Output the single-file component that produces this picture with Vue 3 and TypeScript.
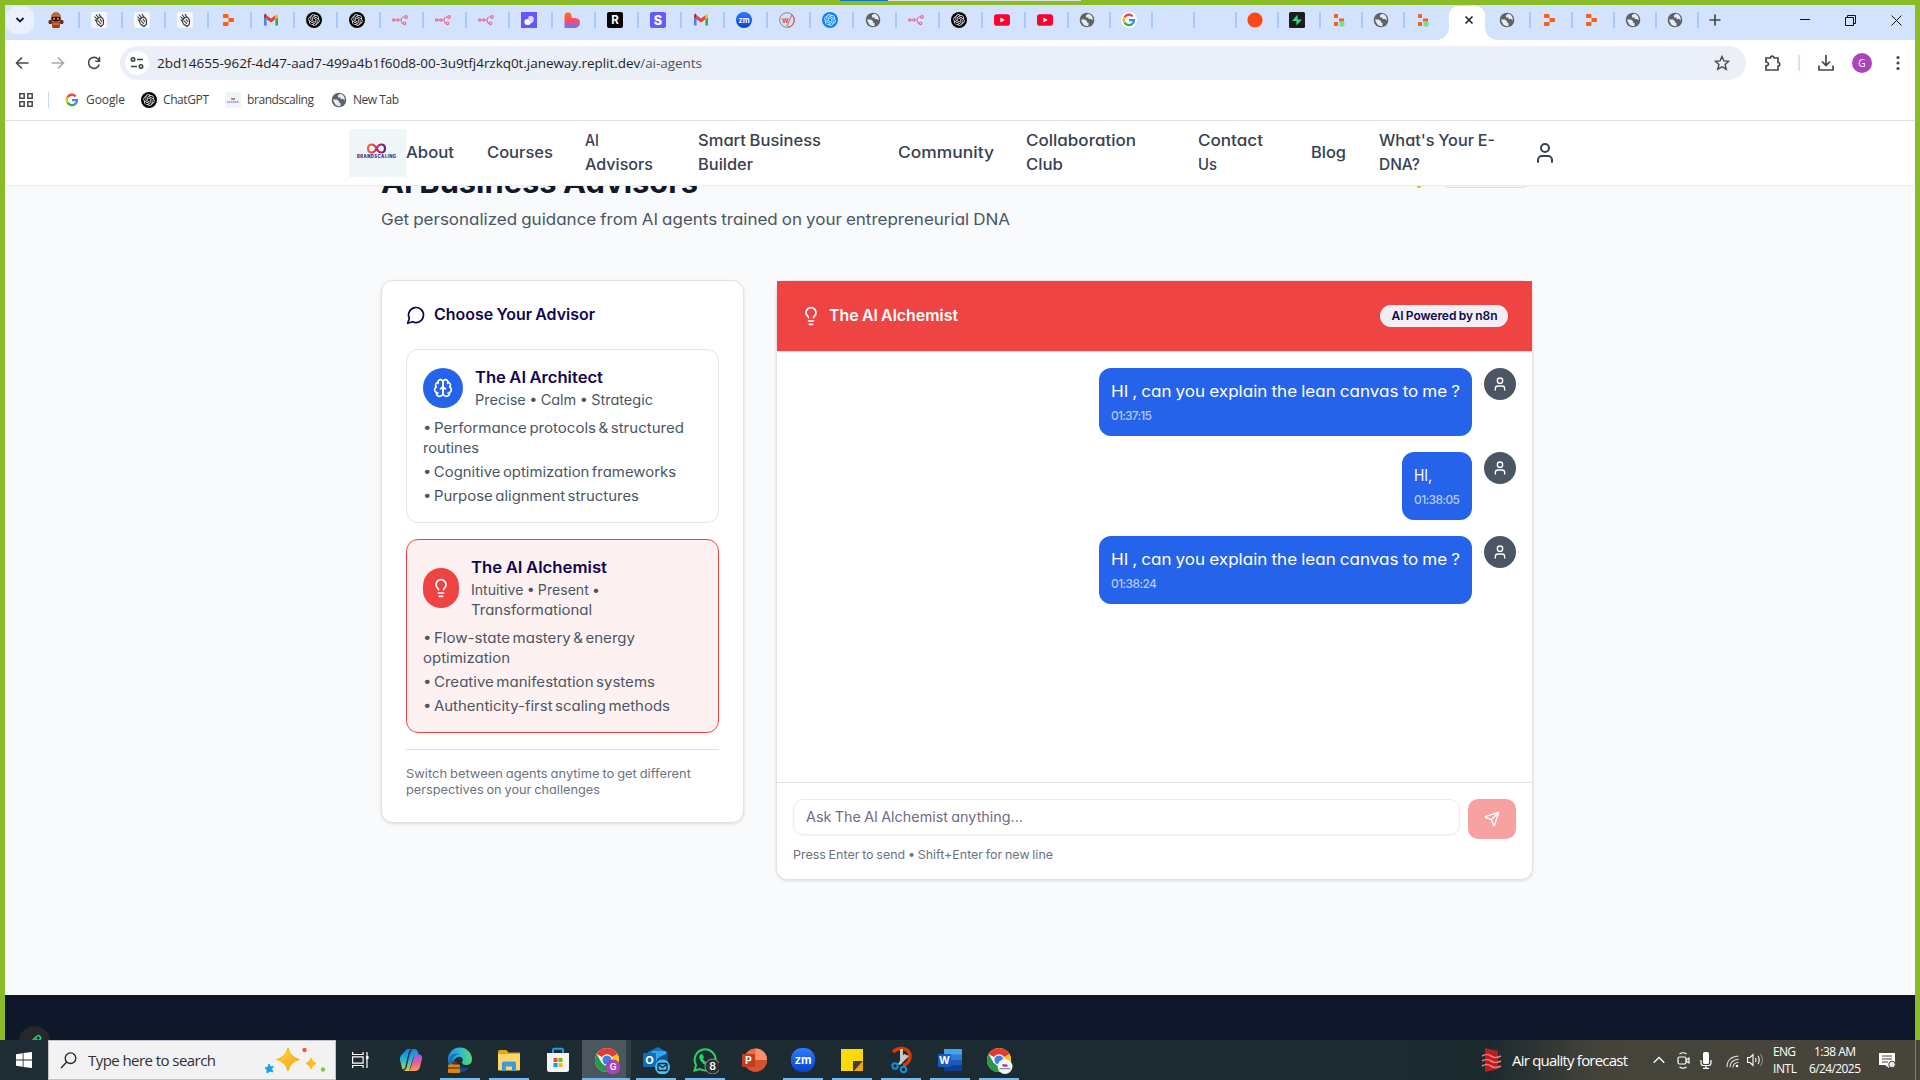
<script setup lang="ts">
interface Tab { icon: string; kind?: string }
interface Line { text: string; w: number }
interface NavItem { width: number; lines: Line[] }
interface Advisor { id: string; name: Line; tags: Line[]; points: Line[][]; icon: string }
interface Message { w: number; text: Line; time: Line }
interface App { icon: string; line?: number; active?: boolean }

const naturalWidth = (el: HTMLElement): number => {
  const range = document.createRange()
  range.selectNodeContents(el)
  return range.getBoundingClientRect().width
}

// Spreads a run of text over an exact width by adjusting its tracking.
const vFit = {
  mounted(el: HTMLElement, binding: { value: number }) {
    const n = Math.max(1, (el.textContent || '').length - 1)
    el.style.letterSpacing = ((binding.value - naturalWidth(el)) / n).toFixed(3) + 'px'
    el.style.width = binding.value + 'px'
  }
}

const vWide = {
  mounted(el: HTMLElement, binding: { value: number }) {
    el.style.transform = `scaleX(${(binding.value / naturalWidth(el)).toFixed(4)})`
    el.style.width = binding.value + 'px'
  }
}

const knot = 'M22.2819 9.8211a5.9847 5.9847 0 0 0-.5157-4.9108 6.0462 6.0462 0 0 0-6.5098-2.9A6.0651 6.0651 0 0 0 4.9807 4.1818a5.9847 5.9847 0 0 0-3.9977 2.9 6.0462 6.0462 0 0 0 .7427 7.0966 5.98 5.98 0 0 0 .511 4.9107 6.051 6.051 0 0 0 6.5146 2.9001A5.9847 5.9847 0 0 0 13.2599 24a6.0557 6.0557 0 0 0 5.7718-4.2058 5.9894 5.9894 0 0 0 3.9977-2.9001 6.0557 6.0557 0 0 0-.7475-7.0729zm-9.022 12.6081a4.4755 4.4755 0 0 1-2.8764-1.0408l.1419-.0804 4.7783-2.7582a.7948.7948 0 0 0 .3927-.6813v-6.7369l2.02 1.1686a.071.071 0 0 1 .038.052v5.5826a4.504 4.504 0 0 1-4.4945 4.4944zm-9.6607-4.1254a4.4708 4.4708 0 0 1-.5346-3.0137l.142.0852 4.783 2.7582a.7712.7712 0 0 0 .7806 0l5.8428-3.3685v2.3324a.0804.0804 0 0 1-.0332.0615L9.74 19.9502a4.4992 4.4992 0 0 1-6.1408-1.6464zM2.3408 7.8956a4.485 4.485 0 0 1 2.3655-1.9728V11.6a.7664.7664 0 0 0 .3879.6765l5.8144 3.3543-2.0201 1.1685a.0757.0757 0 0 1-.071 0l-4.8303-2.7865A4.504 4.504 0 0 1 2.3408 7.872zm16.5963 3.8558L13.1038 8.364 15.1192 7.2a.0757.0757 0 0 1 .071 0l4.8303 2.7913a4.4944 4.4944 0 0 1-.6765 8.1042v-5.6772a.79.79 0 0 0-.407-.667zm2.0107-3.0231l-.142-.0852-4.7735-2.7818a.7759.7759 0 0 0-.7854 0L9.409 9.2297V6.8974a.0662.0662 0 0 1 .0284-.0615l4.8303-2.7866a4.4992 4.4992 0 0 1 6.6802 4.66zM8.3065 12.863l-2.02-1.1638a.0804.0804 0 0 1-.038-.0567V6.0742a4.4992 4.4992 0 0 1 7.3757-3.4537l-.142.0805L8.704 5.459a.7948.7948 0 0 0-.3927.6813zm1.0976-2.3654l2.602-1.4998 2.6069 1.4998v2.9994l-2.5974 1.4997-2.6067-1.4997Z'
const gpt = (bg: string, fg: string) => `<circle cx="8" cy="8" r="8" fill="${bg}"/><path transform="translate(2.3 2.3) scale(.475)" fill="${fg}" d="${knot}"/>`
const font = 'font-family="Inter, sans-serif" text-anchor="middle"'

// Favicons, drawn in a 16x16 box.
const fav: Record<string, string> = {
  robot: '<circle cx="8" cy="5.2" r="5" fill="#b4532c"/><path d="M3 4.5Q8-1 13 4.5l-.5 1h-9z" fill="#d0713c"/><rect x="3.4" y="4.8" width="9.2" height="4.4" rx="1.6" fill="#2e1913"/><circle cx="6" cy="6.8" r="1" fill="#e8a15f"/><circle cx="10" cy="6.8" r="1" fill="#e8a15f"/><rect x=".6" y="8" width="3.4" height="4" rx="1.2" fill="#5a2a1d"/><rect x="12" y="8" width="3.4" height="4" rx="1.2" fill="#5a2a1d"/><path d="M3.5 9.5h9L11.5 16h-7z" fill="#a63c1e"/><path d="M5 12h6" stroke="#f0a24b"/>',
  hand: '<rect width="16" height="16" rx="2.5" fill="#f7f7f8"/><g fill="none" stroke="#34343a" stroke-width="1.100"><path d="M5 2.500l3 4M3.500 4.500l3 3.500M8 2l2 3.500M3.800 7.500l2.200 2.500M10 5q3 2 2.500 5.500l-.3 2L10 14.500 6.500 12q-1.500-2-.5-4.500t4-2.500z"/><path d="M7 8.500l3 3.500M9 7l2 3"/></g>',
  replit: '<path fill="#f86015" d="M3 3q0-1 1-1h3.500q1 0 1 1v3H4Q3 6 3 5zM8.500 6H13q1 0 1 1v2q0 1-1 1H8.500zM3 11q0-1 1-1h4.500v3q0 1-1 1H4q-1 0-1-1z"/>',
  replitOn: '<path fill="#f86015" d="M3 3q0-1 1-1h3v4H3zM8 6.500h5V9.500H8zM3 10h4v4H3z"/><circle cx="11" cy="12" r="2.700" fill="#6fe285"/>',
  gmail: '<path fill="#4285f4" d="M1 13.500h2.600V7.200L1 5.200z"/><path fill="#34a853" d="M12.400 13.500H15V5.200l-2.600 2z"/><path fill="#ea4335" d="M3.600 3.200 8 6.500l4.400-3.300v4L8 10.500 3.600 7.200z"/><path fill="#c5221f" d="M1 3.700Q2-.2 3.600 3.200v4L1 5.200z"/><path fill="#fbbc04" d="M15 3.700Q14 1 12.400 3.200v4L15 5.200z"/>',
  gpt: gpt('#050505', '#fff'),
  gptBlue: gpt('#0b84fa', '#fff'),
  n8n: '<g fill="none" stroke="#ea6d92" stroke-width="1.200"><circle cx="1.700" cy="8" r="1.100"/><circle cx="5.800" cy="8" r="1.100"/><circle cx="14" cy="5" r="1.300"/><circle cx="12.500" cy="11.300" r="1.300"/><path d="M2.900 8h1.700M7 8h1.500Q9.300 8 9.500 6.600T11.300 5h1.300M8.500 8Q9.300 8 9.500 9.700T11 11.300"/></g>',
  purple: '<rect width="16" height="16" fill="#6457fa"/><rect x="3.400" y="7" width="6.500" height="6" rx="3" fill="#fff"/><path d="M7 5.500a3 3 0 0 1 5.500 0c1.200 3.500-1 5.500-3 6z" fill="#d9d5ff"/>',
  heart: '<path fill="url(#heart)" d="M.5 4Q.5.500 4 .500T7.700 4.500V6h3.500Q16 6.300 16 10.500T11.500 16H.5z"/>',
  r: `<rect width="16" height="16" rx="2" fill="#050505"/><text x="8" y="12.200" font-size="11.500" font-weight="700" fill="#fff" ${font}>R</text>`,
  s: `<rect width="16" height="16" rx="2" fill="#635bff"/><text x="8" y="12.500" font-size="12.500" font-weight="800" fill="#fff" ${font}>S</text>`,
  zoom: `<circle cx="8" cy="8" r="8" fill="url(#zoom)"/><text x="8" y="10.500" font-size="7.500" font-weight="700" fill="#fff" ${font}>zm</text>`,
  w: `<circle cx="8" cy="8" r="7.300" fill="none" stroke="#858585"/><path d="M8.500 15.300A7.300 7.300 0 0 0 13 2.700L8 14" fill="none" stroke="#df554d"/><text x="6.500" y="11" font-size="8" font-weight="700" fill="#df554d" ${font}>w</text>`,
  globe: '<circle cx="8" cy="8" r="7.300" fill="#5f6368"/><path fill="#e5ebf5" d="M2 7.500h4l2 1.800v1.500h1.500v3.400Q3.500 14.500 2 7.500zM9.500 1.800 7 3v2.500h2.500V7H12l1.700 1.500Q14.300 3.500 9.500 1.800z"/>',
  youtube: '<rect y="2.300" width="16" height="11.400" rx="2.800" fill="#ff0033"/><path d="M6.400 5.500v5l4.300-2.500z" fill="#fff"/>',
  google: '<circle cx="8" cy="8" r="8" fill="#fff"/><g fill="none" stroke-width="2.300"><path stroke="#ea4335" d="M3.500 5.300A5 5 0 0 1 11.600 4.400"/><path stroke="#fbbc04" d="M3.500 5.300a5.100 5.100 0 0 0 0 5.200"/><path stroke="#34a853" d="M3.500 10.500a5 5 0 0 0 8 1.100"/><path stroke="#4285f4" d="M8 8.200h5a5 5 0 0 1-1.500 3.400"/></g>',
  orange: '<circle cx="8" cy="8" r="7.600" fill="#ff4716"/>',
  supa: '<rect width="16" height="16" rx="1.500" fill="#1c1c1c"/><path fill="#3ecf8e" d="M8.600 2.500v5H13L7.400 13.500V9H3z"/>',
  brand: '<rect width="16" height="16" fill="#edf5f7"/><path d="M8 7c-2.200-2.200-2.200 1.800 0 0s2.200 1.800 0 0" fill="none" stroke="#c2335b" stroke-width=".9"/><path d="M2 10h12" stroke="#59358e" stroke-width=".8" stroke-dasharray="1.500 .4"/>',
  none: ''
}

const rep = (icon: string, n: number): Tab[] => Array.from({ length: n }, () => ({ icon }))
const seq = (names: string, kind: string): Tab[] => names.split(' ').map(icon => ({ icon, kind }))
const tabs: Tab[] = [
  { icon: 'robot' }, ...rep('hand', 3),
  ...seq('replit gmail gpt gpt n8n n8n n8n purple heart r s gmail zoom w gptBlue globe n8n gpt youtube youtube', ''),
  ...seq('globe google none none orange supa replitOn globe', 'slim'), { icon: 'replitOn', kind: 'slim last' }
]
const lateTabs = seq('globe replit replit globe globe', 'slim')

const bookmarks = [
  { icon: 'google', text: 'Google', w: 39, width: 77 },
  { icon: 'gpt', text: 'ChatGPT', w: 46, width: 84 },
  { icon: 'brand', text: 'brandscaling', w: 67, width: 106 },
  { icon: 'globe', text: 'New Tab', w: 46, width: 80 }
]

const nav: NavItem[] = [
  { width: 81, lines: [{ text: 'About', w: 48 }] },
  { width: 98, lines: [{ text: 'Courses', w: 66 }] },
  { width: 113, lines: [{ text: 'AI', w: 14 }, { text: 'Advisors', w: 68 }] },
  { width: 200, lines: [{ text: 'Smart Business', w: 123 }, { text: 'Builder', w: 55 }] },
  { width: 128, lines: [{ text: 'Community', w: 96 }] },
  { width: 172, lines: [{ text: 'Collaboration', w: 110 }, { text: 'Club', w: 37 }] },
  { width: 113, lines: [{ text: 'Contact', w: 65 }, { text: 'Us', w: 19 }] },
  { width: 68, lines: [{ text: 'Blog', w: 35 }] },
  { width: 154, lines: [{ text: "What's Your E-", w: 116 }, { text: 'DNA?', w: 41 }] }
]

const svg = {
  user: '<path d="M19 21v-2a4 4 0 0 0-4-4H9a4 4 0 0 0-4 4v2"/><circle cx="12" cy="7" r="4"/>',
  bulb: '<path d="M15 14c.2-1 .7-1.7 1.5-2.5 1-.9 1.5-2.2 1.5-3.5A6 6 0 0 0 6 8c0 1 .2 2.2 1.5 3.5.7.7 1.3 1.5 1.5 2.500M9 18h6M10 22h4"/>',
  brain: '<path d="M12 5a3 3 0 1 0-5.997.125 4 4 0 0 0-2.526 5.770 4 4 0 0 0 .556 6.588A4 4 0 1 0 12 18Z"/><path d="M12 5a3 3 0 1 1 5.997.125 4 4 0 0 1 2.526 5.770 4 4 0 0 1-.556 6.588A4 4 0 1 1 12 18Z"/><path d="M15 13a4.500 4.500 0 0 1-3-4 4.500 4.500 0 0 1-3 4M17.599 6.500a3 3 0 0 0 .399-1.375M6.003 5.125A3 3 0 0 0 6.401 6.500M3.477 10.896a4 4 0 0 1 .585-.396M19.938 10.500a4 4 0 0 1 .585.396M6 18a4 4 0 0 1-1.967-.516M19.967 17.484A4 4 0 0 1 18 18"/>'
}

const advisors: Advisor[] = [
  {
    id: 'architect', icon: svg.brain,
    name: { text: 'The AI Architect', w: 128 },
    tags: [{ text: 'Precise • Calm • Strategic', w: 178 }],
    points: [
      [{ text: '• Performance protocols & structured', w: 261 }, { text: 'routines', w: 56 }],
      [{ text: '• Cognitive optimization frameworks', w: 253 }],
      [{ text: '• Purpose alignment structures', w: 216 }]
    ]
  },
  {
    id: 'alchemist', icon: svg.bulb,
    name: { text: 'The AI Alchemist', w: 136 },
    tags: [{ text: 'Intuitive • Present •', w: 129 }, { text: 'Transformational', w: 121 }],
    points: [
      [{ text: '• Flow-state mastery & energy', w: 212 }, { text: 'optimization', w: 87 }],
      [{ text: '• Creative manifestation systems', w: 232 }],
      [{ text: '• Authenticity-first scaling methods', w: 247 }]
    ]
  }
]

const messages: Message[] = [
  { w: 373, text: { text: 'HI , can you explain the lean canvas to me ?', w: 349 }, time: { text: '01:37:15', w: 41 } },
  { w: 70, text: { text: 'HI,', w: 18 }, time: { text: '01:38:05', w: 46 } },
  { w: 373, text: { text: 'HI , can you explain the lean canvas to me ?', w: 349 }, time: { text: '01:38:24', w: 46 } }
]

const chrome = '<circle cx="12" cy="12" r="12" fill="#fff"/><path d="M12 12 1.600 6A12 12 0 0 1 22.400 6z" fill="#e33b2e"/><path d="M12 12 22.400 6A12 12 0 0 1 12 24z" fill="#fbc116"/><path d="M1.600 6A12 12 0 0 0 12 24l5.200-9H6.800z" fill="#279847"/><path d="M1.600 6h20.800v.5H12z" fill="#e33b2e"/><circle cx="12" cy="12" r="5.800" fill="#fff"/><circle cx="12" cy="12" r="4.600" fill="#3f7fee"/>'
// Taskbar icons, drawn in a 28x28 box with room for badges.
const app: Record<string, string> = {
  copilot: '<path d="M10 3h8q2 0 3 3l1.500 5h-6L12 25H9q-3 0-4-3L3 14Q2.500 11 4 9.500z" fill="url(#cop1)"/><path d="M18 25h-8q3 0 4-4l3-10q.8-2.500 3-2.500h2.500Q25.500 9 25 13l-2 8q-1.200 4-5 4z" fill="url(#cop2)"/><path d="M15 4q-2 0-3 4l-3 13q-.5 3-3 3" fill="none" stroke="#1d3542" stroke-width="1.400"/>',
  edge: '<path d="M2 14A12 12 0 0 1 26 13q0 6-6 6-4 0-4-3 2-3-1-5-4-1-7 3-2 4 0 8-5-2-6-8z" fill="url(#edge)"/><path d="M2 14q3-8 12-6-8 1-7 8 1 7 8 10Q3 26 2 14z" fill="#1575c9"/><path d="M9 17q3 6 14 5-4 5-11 4z" fill="#164b91"/><rect x="2" y="18.500" width="12" height="8.500" rx="1" fill="#d98711"/><path d="M6 18v-1.500h4V18M2 22h12" fill="none" stroke="#704000" stroke-width="1.300"/>',
  explorer: '<path d="M3 5.500q0-1.500 1.500-1.500h7l2 2.500H25V24H3z" fill="#e9a21b"/><path d="M3 8h22v15.500q0 1-1 1H4q-1 0-1-1z" fill="#ffd668"/><path d="M7 25v-8q0-1.500 1.500-1.500h11q1.500 0 1.500 1.500v8h-4v-4.500h-6V25z" fill="#3d9ade"/>',
  store: '<path d="M9 8V4q0-1.200 1.200-1.200h7.600Q19 2.800 19 4v4" fill="none" stroke="#1aa0e8" stroke-width="2"/><path d="M3 7h22v16.500q0 2.500-2.500 2.500h-17Q3 26 3 23.500z" fill="#f4f4f4"/><path fill="#f04f23" d="M9.500 12h4v4h-4z"/><path fill="#80ba01" d="M14.500 12h4v4h-4z"/><path fill="#02a4ef" d="M9.500 17h4v4h-4z"/><path fill="#ffb902" d="M14.500 17h4v4h-4z"/>',
  chrome: `<g transform="translate(2 2)">${chrome}</g><circle cx="20" cy="21" r="7.500" fill="#a845b9"/><text x="20" y="24.300" font-size="9" font-weight="600" fill="#fff" ${font}>G</text>`,
  outlook: `<path d="M6 6 16 1l10 6v14H6z" fill="#1272c4"/><path d="M10 5h14v13H10z" fill="#34a4ec"/><path d="M16 12l10-5v14H12z" fill="#0f4f96"/><rect x="1" y="7" width="13" height="14" rx="1" fill="#0f6cbd"/><text x="7.500" y="18" font-size="11" font-weight="700" fill="#fff" ${font}>O</text><circle cx="20.500" cy="21" r="7.500" fill="#4cc2f5"/><rect x="16" y="17.500" width="9" height="7" rx="1" fill="none" stroke="#0a2433" stroke-width="1.300"/><path d="m16.500 18.500 4 3 4-3" fill="none" stroke="#0a2433" stroke-width="1.200"/>`,
  whatsapp: `<path d="M3.500 24.500 5 19A10.500 10.500 0 1 1 9 23z" fill="none" stroke="#25d366" stroke-width="2"/><path d="M9.500 8.500 11.500 8l1.500 3.500-1.200 1.500q1.500 2.500 4 3.500l1.500-1.500 3 1.500q0 3-3 3-6-.5-9-7-.5-2.500 1.200-4z" fill="#25d366"/><circle cx="21.500" cy="20.500" r="7.500" fill="#2d3133" stroke="#8d9294"/><text x="21.500" y="24.200" font-size="10.500" font-weight="600" fill="#fff" ${font}>8</text>`,
  ppt: `<circle cx="15.500" cy="14" r="11.500" fill="#ed6c47"/><path d="M15.500 14V2.500A11.500 11.500 0 0 1 27 14z" fill="#ff8f6b"/><path d="M4 14h23A11.500 11.500 0 0 1 4 14z" fill="#d35230"/><rect x="2" y="8" width="13" height="13" rx="1" fill="#c43e1c"/><text x="8.300" y="18.300" font-size="10.500" font-weight="700" fill="#fff" ${font}>P</text>`,
  zoom: `<rect x="2" y="2" width="24" height="24" rx="11" fill="url(#zoom)"/><text x="14" y="18" font-size="11.500" font-weight="700" fill="#fff" ${font}>zm</text>`,
  sticky: '<path d="M3 3h22v13l-9 9H3z" fill="#fdd90b"/><path d="M15 15h10l-9 10h-1z" fill="#40413a"/><path d="M25 15v10h-9z" fill="#eca90a"/>',
  snip: '<path d="M6 6q4-4 10-3.500 7 1.500 7 8-.5 7-7 9" fill="none" stroke="#d83b01" stroke-width="3.500"/><path d="M13 3h3v10l-3 6zM17 8l5 2-9 9-2-1z" fill="#c8c8c8"/><circle cx="8" cy="20" r="2.700" fill="none" stroke="#168ee0" stroke-width="2"/><circle cx="16.500" cy="23.500" r="2.700" fill="none" stroke="#168ee0" stroke-width="2"/>',
  word: `<path d="M8 3h17q1 0 1 1v5H8z" fill="#41a5ee"/><path d="M8 8.500h18V14H8z" fill="#2b7cd3"/><path d="M8 14h18v5.500H8z" fill="#185abd"/><path d="M8 19.500h18V24q0 1-1 1H8z" fill="#103f91"/><rect x="2" y="8" width="13" height="13" rx="1" fill="#185abd"/><text x="8.500" y="18.300" font-size="10.500" font-weight="700" fill="#fff" ${font}>W</text>`,
  chromeBrand: `<g transform="translate(2 2)">${chrome}</g><circle cx="20" cy="20.500" r="7.500" fill="#f1f6fa"/><path d="M20 19.500c-2.800-2.800-2.800 2.400 0 0s2.800 2.400 0 0" fill="none" stroke="#b5306b" stroke-width="1.200"/><path d="M14.500 22.700h11" stroke="#655297" stroke-width=".8"/>`
}
const apps: App[] = [
  { icon: 'copilot' }, { icon: 'edge', line: 40 }, { icon: 'explorer', line: 40 }, { icon: 'store' },
  { icon: 'chrome', line: 48, active: true }, { icon: 'outlook', line: 40 }, { icon: 'whatsapp', line: 40 },
  { icon: 'ppt' }, { icon: 'zoom', line: 40 }, { icon: 'sticky', line: 40 }, { icon: 'snip', line: 40 },
  { icon: 'word', line: 40 }, { icon: 'chromeBrand', line: 40 }
]
</script>

<template>
  <div class="screen">
    <svg class="defs" width="0" height="0">
      <defs>
        <linearGradient id="heart" x2="0" y2="1"><stop offset=".2" stop-color="#ff6a1a" /><stop offset=".55" stop-color="#f9487b" /><stop offset="1" stop-color="#5a7bff" /></linearGradient>
        <linearGradient id="zoom" x2="0" y2="1"><stop stop-color="#2d7bff" /><stop offset="1" stop-color="#0542d0" /></linearGradient>
        <linearGradient id="edge"><stop stop-color="#1b91dc" /><stop offset=".6" stop-color="#35c1c9" /><stop offset="1" stop-color="#5cd860" /></linearGradient>
        <linearGradient id="cop1" x2="0" y2="1"><stop stop-color="#1b7fe0" /><stop offset=".5" stop-color="#27b6cf" /><stop offset="1" stop-color="#d9cf3b" /></linearGradient>
        <linearGradient id="cop2" x2="0" y2="1"><stop stop-color="#9a5be8" /><stop offset=".5" stop-color="#ea5d9a" /><stop offset="1" stop-color="#ff9a5a" /></linearGradient>
        <linearGradient id="logo"><stop stop-color="#f4623a" /><stop offset=".45" stop-color="#d9305f" /><stop offset="1" stop-color="#5b2080" /></linearGradient>
        <linearGradient id="star" x2="1" y2="1"><stop stop-color="#ffd84a" /><stop offset="1" stop-color="#f5a30d" /></linearGradient>
      </defs>
    </svg>

    <div class="window">
      <div class="notch"><i class="blue"></i><i class="grey"></i></div>
      <div class="tabstrip">
        <div class="tabsearch"><svg width="10" height="10" viewBox="0 0 10 10"><path d="M1.500 3 5 6.500 8.500 3" fill="none" stroke="#1f1f1f" stroke-width="1.800" /></svg></div>
        <div v-for="(t, i) in tabs" :key="i" class="tab" :class="t.kind"><svg width="16" height="16" viewBox="0 0 16 16" v-html="fav[t.icon]"></svg></div>
        <div class="tab-active"><svg width="10" height="10" viewBox="0 0 10 10"><path d="m1.500 1.500 7 7m0-7-7 7" stroke="#1f1f1f" stroke-width="1.600" /></svg></div>
        <div v-for="(t, i) in lateTabs" :key="'l' + i" class="tab" :class="t.kind"><svg width="16" height="16" viewBox="0 0 16 16" v-html="fav[t.icon]"></svg></div>
        <svg class="plus" width="12" height="12" viewBox="0 0 12 12"><path d="M6 .5v11M.5 6h11" stroke="#444746" stroke-width="1.700" /></svg>
        <div class="controls">
          <svg width="10" height="10" viewBox="0 0 10 10"><path d="M0 4.500h10" stroke="#111" /></svg>
          <svg width="11" height="11" viewBox="0 0 11 11"><path d="M.5 2.500h8v8h-8zM2.500 2.500v-2h8v8h-2" fill="none" stroke="#111" /></svg>
          <svg width="11" height="11" viewBox="0 0 11 11"><path d="m.5.5 10 10m0-10-10 10" stroke="#111" /></svg>
        </div>
      </div>

      <div class="toolbar">
        <div class="navbtns">
          <svg width="14" height="14" viewBox="0 0 14 14"><path d="M13.500 7H2M7 1.500 1.500 7 7 12.500" fill="none" stroke="#46484a" stroke-width="1.600" /></svg>
          <svg width="14" height="14" viewBox="0 0 14 14"><path d="M.5 7H12M7 1.500 12.500 7 7 12.500" fill="none" stroke="#a8aaac" stroke-width="1.600" /></svg>
          <svg width="14" height="14" viewBox="0 0 14 14"><path d="M12.300 8.500A5.500 5.500 0 1 1 11 3l1.500 1.600M12.500.8v4.400H8.200" fill="none" stroke="#46484a" stroke-width="1.600" /></svg>
        </div>
        <div class="omnibox">
          <div class="siteinfo"><svg width="14" height="14" viewBox="0 0 14 14" fill="none" stroke="#3c4043" stroke-width="1.600"><circle cx="3" cy="3.500" r="1.700" /><path d="M7 3.500h6M1 10.500h6" /><circle cx="11" cy="10.500" r="1.700" /></svg></div>
          <span v-fit="545" class="url">2bd14655-962f-4d47-aad7-499a4b1f60d8-00-3u9tfj4rzkq0t.janeway.replit.dev<em>/ai-agents</em></span>
          <svg class="bookstar" width="16" height="16" viewBox="0 0 16 16"><path d="m8 1.500 1.900 4.400 4.800.4-3.600 3.200 1.100 4.700L8 11.700l-4.200 2.500 1.100-4.700L1.300 6.300l4.800-.4z" fill="none" stroke="#46484a" stroke-width="1.400" /></svg>
        </div>
        <svg class="ext" width="18" height="18" viewBox="0 0 18 18"><path d="M2 4h4.500a1.800 1.800 0 0 1 3.600 0H14v4.500a1.800 1.800 0 0 1 0 3.600V16H2v-4.200q2.500-.3 2.500-1.900T2 8z" fill="none" stroke="#46484a" stroke-width="1.700" /></svg>
        <i class="tsep"></i>
        <svg class="dl" width="16" height="16" viewBox="0 0 16 16"><path d="M8 0v10M4 6.500l4 4 4-4M1 10.500V15h14v-4.500" fill="none" stroke="#46484a" stroke-width="1.700" /></svg>
        <span class="me">G</span>
        <svg class="dots" width="4" height="16" viewBox="0 0 4 16" fill="#46484a"><circle cx="2" cy="2.500" r="1.600" /><circle cx="2" cy="8" r="1.600" /><circle cx="2" cy="13.500" r="1.600" /></svg>
      </div>

      <div class="bookmarks">
        <svg class="grid" width="14" height="14" viewBox="0 0 14 14"><path d="M.8.8h4.400v4.400H.8zM8.800.8h4.400v4.400H8.800zM.8 8.800h4.400v4.400H.8zM8.800 8.800h4.400v4.400H8.800z" fill="none" stroke="#46484a" stroke-width="1.500" /></svg>
        <i></i>
        <div v-for="b in bookmarks" :key="b.text" class="bm" :style="{ width: b.width + 'px' }">
          <svg width="16" height="16" viewBox="0 0 16 16" v-html="fav[b.icon]"></svg><span v-fit="b.w">{{ b.text }}</span>
        </div>
      </div>

      <div class="page">
        <header class="site">
          <div class="logo">
            <svg width="57" height="48" viewBox="0 0 57 48"><path d="M27.500 19.500c-3-6-8.500-4.500-8.500 0s5.500 6 8.500 0 8.500-4.500 8.500 0-5.500 6-8.500 0z" fill="none" stroke="url(#logo)" stroke-width="2.100" /><text x="8" y="29.300" font-size="4.200" font-weight="800" font-family="Inter, sans-serif" fill="#3b1c78" textLength="39">BRANDSCALING</text></svg>
          </div>
          <nav>
            <a v-for="(n, i) in nav" :key="i" :style="{ width: n.width + 'px' }"><span v-for="l in n.lines" :key="l.text" v-wide="l.w" class="ln">{{ l.text }}</span></a>
          </nav>
          <svg class="lucide account" width="24" height="24" viewBox="0 0 24 24" v-html="svg.user"></svg>
        </header>

        <main>
          <div class="heading">
            <div>
              <h1><span v-wide="317" class="ln">AI Business Advisors</span></h1>
              <p><span v-wide="629" class="ln">Get personalized guidance from AI agents trained on your entrepreneurial DNA</span></p>
            </div>
            <div class="status"><b></b><i></i></div>
          </div>

          <div class="columns">
            <section class="card chooser">
              <h2><svg class="lucide" width="20" height="20" viewBox="0 0 24 24"><path d="M7.900 20A9 9 0 1 0 4 16.100L2 22Z" /></svg><span v-wide="161" class="ln">Choose Your Advisor</span></h2>
              <article v-for="a in advisors" :key="a.id" :class="a.id">
                <div class="who">
                  <span class="face"><svg class="lucide" width="20" height="20" viewBox="0 0 24 24" v-html="a.icon"></svg></span>
                  <div>
                    <h3><span v-wide="a.name.w" class="ln">{{ a.name.text }}</span></h3>
                    <p><span v-for="l in a.tags" :key="l.text" v-wide="l.w" class="ln">{{ l.text }}</span></p>
                  </div>
                </div>
                <ul><li v-for="(p, i) in a.points" :key="i"><span v-for="l in p" :key="l.text" v-wide="l.w" class="ln">{{ l.text }}</span></li></ul>
              </article>
              <footer><span v-wide="285" class="ln">Switch between agents anytime to get different</span><span v-wide="194" class="ln">perspectives on your challenges</span></footer>
            </section>

            <section class="card chat">
              <div class="chathead">
                <svg class="lucide" width="20" height="20" viewBox="0 0 24 24" v-html="svg.bulb"></svg>
                <h2><span v-wide="129" class="ln">The AI Alchemist</span></h2>
                <span class="badge"><span v-fit="106" class="ln">AI Powered by n8n</span></span>
              </div>
              <div class="thread">
                <div v-for="(m, i) in messages" :key="i" class="msg">
                  <div class="bubble" :style="{ width: m.w + 'px' }"><span v-wide="m.text.w" class="ln">{{ m.text.text }}</span><time><span v-fit="m.time.w" class="ln">{{ m.time.text }}</span></time></div>
                  <span class="avatar"><svg class="lucide" width="16" height="16" viewBox="0 0 24 24" v-html="svg.user"></svg></span>
                </div>
              </div>
              <div class="composer">
                <div class="row">
                  <div class="input"><span v-wide="217" class="ln">Ask The AI Alchemist anything...</span></div>
                  <button><svg class="lucide" width="16" height="16" viewBox="0 0 24 24"><path d="M14.536 21.686a.5.5 0 0 0 .937-.024l6.500-19a.496.496 0 0 0-.635-.635l-19 6.500a.5.5 0 0 0-.024.937l7.930 3.180a2 2 0 0 1 1.112 1.110zM21.854 2.147l-10.940 10.939" /></svg></button>
                </div>
                <p><span v-wide="260" class="ln">Press Enter to send • Shift+Enter for new line</span></p>
              </div>
            </section>
          </div>
        </main>

        <div class="sitefoot">
          <span class="widget"><svg width="14" height="14" viewBox="0 0 14 14"><path d="m2 8 5-5q2-2.500 4-.5t-1.500 4L5 11M6 4l3 3" fill="none" stroke="#18d98a" stroke-width="1.500" /></svg></span>
        </div>
      </div>
    </div>

    <div class="taskbar">
      <div class="start"><svg width="16" height="16" viewBox="0 0 16 16" fill="#fff"><path d="M0 2.200 6.700 1.200v6.400H0zM7.500 1.100 16 0v7.600H7.500zM0 8.400h6.700v6.400L0 13.800zM7.500 8.400H16V16l-8.500-1.100z" /></svg></div>
      <div class="search">
        <svg width="17" height="17" viewBox="0 0 17 17"><circle cx="10.500" cy="6.200" r="5.300" fill="none" stroke="#222" stroke-width="1.300" /><path d="M6.700 10 1 16" stroke="#222" stroke-width="1.300" /></svg>
        <span v-fit="128">Type here to search</span>
        <svg class="sparkle" width="62" height="28" viewBox="0 0 62 28"><path d="M24 2q2 9 11.500 11.500Q26 16 24 25q-2-9-11.500-11.500Q22 11 24 2z" fill="url(#star)" stroke="#f5b51c" /><path d="M47 12q1 4 5 5.500-4 1.500-5 5.500-1-4-5-5.500 4-1.500 5-5.500z" fill="#fbbd1b" stroke="#fbbd1b" /><path d="m5 18 1.500 3 3-.5-2 2.500 1.500 3-3-1L3 27v-3.500L1 22l3-1z" fill="#18a2f2" stroke="#18a2f2" /><circle cx="40.500" cy="4" r="2.200" fill="#f0592b" /><circle cx="59" cy="23.500" r="2.200" fill="#86c83f" /></svg>
      </div>
      <div class="taskview"><svg width="17" height="16" viewBox="0 0 17 16" fill="none" stroke="#fff" stroke-width="1.200"><path d="M.6 0v2.500h10.500V0M.6 16v-2.500h10.500V16M.6 4.800h10.500v6.300H.6zM15 0v16" /><rect x="14" y="4" width="2.500" height="3" fill="#fff" stroke="none" /></svg></div>
      <div v-for="a in apps" :key="a.icon" class="app" :class="{ active: a.active }">
        <svg width="28" height="28" viewBox="0 0 28 28" v-html="app[a.icon]"></svg>
        <i v-if="a.line" :style="{ width: a.line + 'px' }"></i>
      </div>
      <div class="tray">
        <svg class="air" width="22" height="26" viewBox="0 0 22 26"><path d="M4 1l13 3v18L4 25z" fill="#b81f1f" /><path d="M1 9q5-3 9 0t10 0M1 14q5-3 9 0t10 0M1 19q5-3 9 0t10 0" fill="none" stroke="#f07777" stroke-width="1.700" /></svg>
        <span v-fit="116" class="forecast">Air quality forecast</span>
        <svg class="chev" width="12" height="8" viewBox="0 0 12 8"><path d="M.7 6.700 6 1.500l5.300 5.200" fill="none" stroke="#fff" stroke-width="1.300" /></svg>
        <svg class="meet" width="13" height="17" viewBox="0 0 13 17" fill="none" stroke="#fff" stroke-width="1.200"><rect x="1" y="5" width="8" height="7" rx="1.500" /><path d="m9 8 3-2v5L9 9M2.500 2q3.500-2.500 7 0M2.500 15q3.500 2.500 7 0" /></svg>
        <svg class="mic" width="12" height="17" viewBox="0 0 12 17"><rect x="3" y="0" width="6" height="12" rx="1.500" fill="#fff" /><path d="M1 8v3q0 2.500 2.500 2.500h5Q11 13.500 11 11V8M6 13.500V16M3 16.300h6" fill="none" stroke="#fff" stroke-width="1.200" /></svg>
        <svg class="wifi" width="13" height="13" viewBox="0 0 13 13" fill="none" stroke="#ddd" stroke-width="1.100"><path d="M1 12Q1 2 12.500 1M4 12.300Q4 5 12.500 4.200M7 12.500Q7 8 12.500 7.300" /><circle cx="11" cy="11" r="1.300" fill="#fff" stroke="none" /></svg>
        <svg class="vol" width="17" height="14" viewBox="0 0 17 14" fill="none" stroke="#fff" stroke-width="1.100"><path d="M.6 4.500h2.500L6 1.500v11L3.100 9.500H.6zM8.500 5q1.300 2 0 4M11 3q2.500 4 0 8" /><path d="M13.500 1q4 6 0 12" stroke="#888" /></svg>
        <div class="stack lang"><span v-fit="23">ENG</span><span v-fit="24">INTL</span></div>
        <div class="stack clock"><span v-fit="42">1:38 AM</span><span v-fit="52">6/24/2025</span></div>
        <svg class="note" width="17" height="17" viewBox="0 0 17 17"><path d="M0 1h16v11h-5l-1 4-4-3H0z" fill="#fff" /><path d="M3 4h10M3 7h10M3 10h6" stroke="#47453a" stroke-width="1.200" /><circle cx="13" cy="12.500" r="3.300" fill="#e8e8e8" stroke="#47453a" /></svg>
        <i class="peek"></i>
      </div>
    </div>
  </div>
</template>

<style>
body { margin: 0; overflow: hidden; }
</style>

<style scoped>
* { box-sizing: border-box; }
h1, h2, h3, p, ul { margin: 0; padding: 0; list-style: none; font-weight: inherit; }
svg { flex: none; display: block; }
.defs { position: absolute; }
.screen { width: 1920px; height: 1080px; display: flex; flex-direction: column; overflow: hidden; font-family: "Open Sans", "Noto Sans", sans-serif; }
.window { height: 1040px; flex: none; border: 5px solid #8abc27; border-bottom: 0; background: #fff; display: flex; flex-direction: column; position: relative; }
.notch { position: absolute; top: -5px; left: 835px; display: flex; height: 1px; }
.notch .blue { width: 48px; background: #0878d4; }
.notch .grey { width: 193px; background: #dfe2df; }

.tabstrip { height: 35px; flex: none; background: #d3e2fd; display: flex; align-items: flex-start; }
.tabsearch { width: 28px; height: 28px; margin: 1px 3px 0 1px; border-radius: 10px; background: #e9f0fe; display: flex; align-items: center; justify-content: center; }
.tab { width: 43px; height: 16px; margin-top: 7px; padding-left: 11px; border-right: 2px solid #a8c7fa; flex: none; }
.tab.slim { width: 42px; padding-left: 10px; }
.tab.last { border-color: transparent; }
.tab-active { width: 36px; height: 34px; margin: 1px 4px 0 2px; padding-left: 3px; border-radius: 9px 9px 0 0; background: #fff; display: flex; align-items: center; justify-content: center; padding-bottom: 6px; position: relative; flex: none; }
.tab-active::before, .tab-active::after { content: ""; position: absolute; bottom: 0; width: 12px; height: 12px; }
.tab-active::before { left: -12px; background: radial-gradient(circle at 0 0, transparent 11.500px, #fff 12px); }
.tab-active::after { right: -12px; background: radial-gradient(circle at 100% 0, transparent 11.500px, #fff 12px); }
.plus { margin: 9px 0 0 10px; }
.controls { margin: 10px 13px 0 auto; display: flex; gap: 35px; }

.toolbar { height: 46px; flex: none; display: flex; align-items: center; }
.navbtns { display: flex; gap: 22px; width: 115px; padding-left: 10px; }
.omnibox { width: 1626px; height: 34px; border-radius: 17px; background: #ebeff8; display: flex; align-items: center; padding-left: 5px; }
.siteinfo { width: 24px; height: 24px; border-radius: 50%; background: #fff; display: flex; align-items: center; justify-content: center; margin-right: 8px; }
.url { font-size: 13.500px; color: #1f1f1f; white-space: nowrap; }
.url em { font-style: normal; color: #50545a; }
.bookstar { margin: 0 16px 0 auto; }
.ext { margin-left: 18px; }
.tsep { width: 2px; height: 16px; background: #d3e2fd; margin: 0 18px 0 16px; }
.me { width: 20px; height: 20px; border-radius: 50%; background: #a845b9; color: #fff; font-size: 10px; line-height: 20px; text-align: center; margin-left: 18px; }
.dots { margin-left: 24px; }

.bookmarks { height: 35px; flex: none; border-bottom: 1px solid #dcdedf; display: flex; align-items: center; padding: 0 0 7px 14px; }
.bookmarks > i { width: 1px; height: 16px; background: #c6dafb; margin: 0 15px 0 15px; }
.bm { display: flex; gap: 6px; align-items: center; font-size: 12px; color: #3c4043; white-space: nowrap; }

.page { flex: 1; min-height: 0; background: #f8fafc; display: flex; flex-direction: column; font-family: Inter, "Noto Sans", sans-serif; font-feature-settings: "cv11"; }
.ln { display: block; white-space: nowrap; transform-origin: 0 50%; word-spacing: -.7px; }
.lucide { fill: none; stroke: currentColor; stroke-width: 2; stroke-linecap: round; stroke-linejoin: round; }
.site { height: 65px; flex: none; background: #fff; border-bottom: 1px solid #eceef1; display: flex; align-items: center; padding-left: 344px; position: relative; z-index: 1; box-shadow: 0 1px 2px rgba(0, 0, 0, .03); }
.logo { background: #eef6f8; }
.site nav { display: flex; align-items: center; }
.site nav a { font-size: 15.500px; line-height: 24px; font-weight: 500; color: #374151; }
.account { color: #374151; }

main { height: 809px; flex: none; padding-left: 376px; }
.heading { width: 1152px; display: flex; justify-content: space-between; margin-top: -31px; height: 126px; }
h1 { font-size: 30px; line-height: 36px; font-weight: 700; color: #111827; margin-top: 9px; }
.heading p { font-size: 15.500px; line-height: 24px; color: #4b5563; margin-top: 8px; }
.status { display: flex; align-items: flex-end; height: 33px; gap: 22px; margin-right: 4px; }
.status b { width: 4px; height: 4px; border-radius: 50%; background: #eeb00e; }
.status i { width: 86px; height: 33px; border: 1px solid #dedee6; border-radius: 7px; }
.columns { display: flex; gap: 32px; align-items: flex-start; }
.card { background: #fff; border: 1px solid #e2e3e8; border-radius: 12px; box-shadow: 0 1px 3px rgba(0, 0, 0, .12); }
.chooser { width: 363px; height: 543px; margin-top: -1px; padding: 24px; }
.chooser h2 { display: flex; align-items: center; gap: 8px; font-size: 15.500px; line-height: 20px; font-weight: 600; color: #10064f; margin: 0 0 24px; }
.chooser h2 .ln { margin-top: -1px; }
article { border: 1px solid #e3e4e8; border-radius: 12px; padding: 16px; margin-bottom: 16px; height: 174px; color: #4b5563; font-size: 14px; line-height: 20px; }
article.alchemist { height: 194px; border-color: #ef4444; background: #fef1f1; }
.who { display: flex; align-items: center; gap: 12px; margin-bottom: 8px; }
.who h3 { font-size: 15.500px; line-height: 24px; font-weight: 600; color: #10064f; }
.face { width: 40px; height: 40px; border-radius: 50%; background: #2563eb; color: #fff; display: flex; align-items: center; justify-content: center; }
.alchemist .face { width: 36px; border-radius: 18px; background: #ef4444; }
li { margin-bottom: 4px; }
li .ln { word-spacing: -1.600px; }
.chooser footer { border-top: 1px solid #dfe1e6; padding-top: 16px; font-size: 12px; line-height: 16px; color: #6b7280; }
.chat { width: 757px; height: 600px; display: flex; flex-direction: column; margin-top: -1px; }
.chathead { height: 71px; flex: none; background: #ef4444; border-bottom: 1px solid #e4e4ea; color: #fff; display: flex; align-items: center; padding: 0 24px; gap: 8px; }
.chathead h2 { font-size: 15.500px; line-height: 24px; font-weight: 600; }
.badge { margin-left: auto; width: 128px; height: 22px; padding-left: 11.500px; border-radius: 11px; background: #f1eff5; color: #10064f; font-size: 12px; line-height: 22px; font-weight: 600; }
.thread { flex: 1; padding: 16px; display: flex; flex-direction: column; gap: 16px; }
.msg { display: flex; justify-content: flex-end; gap: 12px; height: 68px; }
.bubble { padding: 12px; border-radius: 12px; background: #2563eb; color: #fff; font-size: 15.500px; line-height: 24px; }
.bubble time { display: block; font-size: 12px; line-height: 16px; font-weight: 500; margin-top: 4px; color: #b3c9f8; }
.avatar { width: 32px; height: 32px; border-radius: 50%; background: #4b5563; color: #fff; display: flex; align-items: center; justify-content: center; }
.composer { height: 97px; border-top: 1px solid #e1e2e6; padding: 16px; }
.row { display: flex; gap: 8px; }
.input { flex: 1; height: 36px; border: 1px solid #ebecf0; border-radius: 10px; box-shadow: 0 1px 2px rgba(0, 0, 0, .05); padding-left: 12px; font-size: 14px; line-height: 34px; color: #716a85; }
.row button { width: 48px; height: 40px; border: 0; border-radius: 10px; background: #f7a1a1; color: #fff; display: flex; align-items: center; justify-content: center; }
.composer p { font-size: 12px; line-height: 16px; margin-top: 8px; color: #6b7280; }
.sitefoot { flex: 1; min-height: 0; background: #0f172a; overflow: hidden; padding: 31px 0 0 14px; }
.widget { width: 31px; height: 31px; border-radius: 50%; background: #262729; display: flex; padding: 8px 0 0 10px; }

.taskbar { height: 40px; flex: none; display: flex; background: linear-gradient(90deg, #1e2c33 0, #1b2b31 1400px, #1c2a2e 1490px, #45443a 1600px, #47453a 100%); color: #fff; }
.start { width: 48px; display: flex; align-items: center; padding-left: 16px; }
.search { width: 288px; border: 1px solid #bfc1c2; background: #f2f2f2; display: flex; align-items: center; padding-left: 11px; }
.search span { margin-left: 11px; font-size: 15px; color: #303030; white-space: nowrap; }
.sparkle { margin-left: 48px; }
.taskview { width: 50px; display: flex; align-items: center; padding-left: 16px; }
.app { width: 49px; height: 40px; display: flex; align-items: center; justify-content: center; position: relative; }
.app.active { background: linear-gradient(90deg, #4b575d 44px, #303d42 44px); }
.app > i { position: absolute; left: 5px; bottom: 0; height: 2px; background: #76b9ed; }
.app.active > i { left: 0; }
.tray { margin-left: auto; width: 439px; display: flex; align-items: center; font-size: 15px; white-space: nowrap; }
.forecast { margin-left: 9px; }
.chev { margin-left: 25px; }
.meet { margin-left: 12px; }
.mic { margin-left: 10px; }
.wifi { margin-left: 14px; margin-top: 3px; }
.vol { margin-left: 8px; }
.stack { font-size: 12px; line-height: 17.500px; display: flex; flex-direction: column; align-items: center; }
.lang { margin-left: 9px; align-items: flex-start; }
.clock { margin-left: 12px; }
.note { margin-left: 18px; }
.peek { width: 1px; height: 40px; margin: 0 4px 0 auto; background: #7d7b72; }
</style>
